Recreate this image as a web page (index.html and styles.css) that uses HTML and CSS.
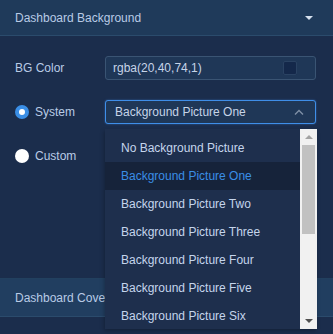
FILE: index.html
```html
<!DOCTYPE html>
<html lang="en">
<head>
    <meta charset="UTF-8">
    <meta name="viewport" content="width=device-width, initial-scale=1.0">
    <title>Dashboard Settings</title>
    <link rel="stylesheet" href="styles.css">
</head>
<body>

    <div class="panel">
        <!-- Background section -->
        <div class="section-head">
            <span>Dashboard Background</span>
            <span class="caret"></span>
        </div>

        <div class="section-body">
            <div class="row">
                <div class="label">BG Color</div>
                <div class="field">
                    <span>rgba(20,40,74,1)</span>
                    <span class="swatch"></span>
                </div>
            </div>

            <div class="row">
                <div class="label"><span class="radio checked"></span>System</div>
                <div class="select-wrap">
                    <div class="field select">
                        <span>Background Picture One</span>
                        <svg class="chevron" width="10" height="6" viewBox="0 0 10 6">
                            <path d="M1 5.5 L5 1.5 L9 5.5" fill="none" stroke="#7f8fa6" stroke-width="1.4"/>
                        </svg>
                    </div>

                    <!-- open dropdown -->
                    <div class="dropdown">
                        <ul class="options">
                            <li>No Background Picture</li>
                            <li class="active">Background Picture One</li>
                            <li>Background Picture Two</li>
                            <li>Background Picture Three</li>
                            <li>Background Picture Four</li>
                            <li>Background Picture Five</li>
                            <li>Background Picture Six</li>
                        </ul>
                        <div class="scrollbar">
                            <span class="arrow up"></span>
                            <span class="thumb"></span>
                            <span class="arrow down"></span>
                        </div>
                    </div>
                </div>
            </div>

            <div class="row">
                <div class="label"><span class="radio"></span>Custom</div>
            </div>
        </div>

        <!-- Cover section -->
        <div class="section-head light">
            <span>Dashboard Cover</span>
        </div>
        <div class="section-body short"></div>
    </div>

</body>
</html>
```

FILE: styles.css
```css
body {
    margin: 0;
    background-color: #1b2d4c;
    font-family: "Liberation Sans", Arial, sans-serif;
    font-size: 12px;
    color: #b9cbe6;
}
.panel {
    width: 333px;
    height: 334px;
    overflow: hidden;
}
.section-head {
    height: 35px;
    padding: 0 15px;
    display: flex;
    align-items: center;
    justify-content: space-between;
    background: #1f3a5a;
    border-bottom: 1px solid #2b4b6c;
}
.section-head.light {
    height: 37px;
    background: #213e60;
    border-top: 1px solid #22405f;
}
.caret {
    width: 0;
    height: 0;
    margin-right: 5px;
    border-left: 4px solid transparent;
    border-right: 4px solid transparent;
    border-top: 4px solid #d6e0ee;
}
.section-body {
    padding: 20px 17px 110px 15px;
    display: flex;
    flex-direction: column;
    gap: 20px;
}
.section-body.short {
    padding: 0;
    height: 20px;
}
.row {
    display: flex;
    align-items: center;
    height: 24px;
}
.label {
    width: 90px;
    display: flex;
    align-items: center;
    gap: 6px;
}
.radio {
    width: 14px;
    height: 14px;
    border-radius: 50%;
    background: #ffffff;
    box-sizing: border-box;
}
.radio.checked {
    border: 4px solid #3a8ee6;
    background: #ffffff;
}
.field {
    flex: 1;
    height: 24px;
    box-sizing: border-box;
    padding: 0 18px 0 7px;
    display: flex;
    align-items: center;
    justify-content: space-between;
    background: #1f3757;
    border: 1px solid #3a5473;
    border-radius: 3px;
    color: #c6d4e8;
}
.swatch {
    width: 14px;
    height: 14px;
    border-radius: 2px;
    background: #14284a;
    border: 1px solid #2a4262;
    box-sizing: border-box;
}
.select-wrap {
    flex: 1;
    position: relative;
}
.select {
    padding: 0 11px 0 9px;
    border-color: #3f8ee8;
    box-shadow: 0 0 2px rgba(64, 142, 232, 0.6);
}
.dropdown {
    position: absolute;
    top: 29px;
    left: 0;
    right: -1px;
    height: 200px;
    display: flex;
    background: #1e2f4d;
    box-shadow: -1px 2px 4px rgba(0, 0, 0, 0.25);
    z-index: 5;
}
.options {
    flex: 1;
    list-style: none;
    margin: 0;
    padding: 5px 0;
}
.options li {
    height: 28px;
    line-height: 28px;
    padding-left: 16px;
    color: #c5d5ec;
    white-space: nowrap;
}
.options li.active {
    background: #16233a;
    color: #3a8ee6;
}
.scrollbar {
    width: 17px;
    background: #f1f1f1;
    display: flex;
    flex-direction: column;
    align-items: center;
}
.thumb {
    width: 13px;
    height: 89px;
    background: #c1c1c1;
    margin-top: 1px;
}
.arrow {
    width: 0;
    height: 0;
    border-left: 4px solid transparent;
    border-right: 4px solid transparent;
}
.arrow.up {
    margin-top: 6px;
    margin-bottom: 5px;
    border-bottom: 4px solid #a3a3a3;
}
.arrow.down {
    margin-top: auto;
    margin-bottom: 6px;
    border-top: 4px solid #505050;
}
```
